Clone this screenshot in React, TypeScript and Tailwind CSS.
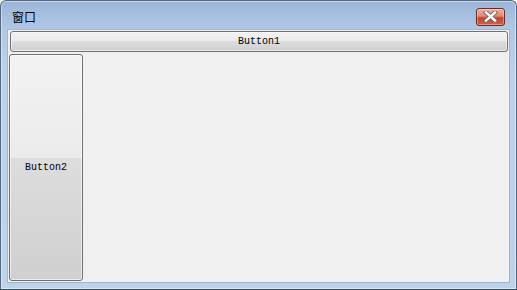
import React from 'react'

function CloseButton() {
  return (
    <button className="flex h-[18px] w-[29px] items-center justify-center rounded-[3px] border border-[#6e2b22] bg-[linear-gradient(#eab0a0_0%,#dc8a74_45%,#c4432c_55%,#d0624a_100%)] shadow-[inset_0_0_0_1px_rgba(255,255,255,0.35)]">
      <svg width="15" height="11" viewBox="0 0 15 11">
        <path d="M3 1.5 L12 9.5 M12 1.5 L3 9.5" stroke="#6a6a6a" strokeWidth="4.2" strokeLinecap="square" />
        <path d="M3 1.5 L12 9.5 M12 1.5 L3 9.5" stroke="#ffffff" strokeWidth="2.4" strokeLinecap="square" />
      </svg>
    </button>
  )
}

function WinButton({ label, className }: { label: string; className?: string }) {
  return (
    <button
      className={
        'flex items-center justify-center rounded-[3px] border border-[#707070] font-["Liberation_Mono",monospace] text-[10px] text-black shadow-[inset_0_0_0_1px_rgba(255,255,255,0.6)] ' +
        (className ?? '')
      }
    >
      {label}
    </button>
  )
}

export default function App() {
  return (
    <div className="flex h-[290px] w-[517px] flex-col overflow-hidden rounded-t-[6px] border border-[#55677c] border-b-[#2f5560] bg-[linear-gradient(#9bb6da_0px,#b0c8e4_28px,#bcd2ea_70px,#bcd3ea_100%)] shadow-[inset_0_0_0_1px_rgba(255,255,255,0.45)]">
      <div className="flex h-[28px] shrink-0 items-center justify-between pl-[11px] pr-[11px]">
        <span className='pt-[3px] font-["Noto_Sans_CJK_SC",sans-serif] text-[12px] leading-none text-black'>
          窗口
        </span>
        <div className="pt-[3px]">
          <CloseButton />
        </div>
      </div>
      <div className="mx-[6px] mb-[6px] flex flex-1 flex-col border border-[#9fb5cf] bg-[#f0f0f0] pl-[1px] pr-[1px] pt-[1px]">
        <WinButton
          label="Button1"
          className="ml-[1px] h-[21px] w-auto bg-[linear-gradient(#f2f2f2_0%,#ebebeb_50%,#dddddd_50%,#cfcfcf_100%)]"
        />
        <WinButton
          label="Button2"
          className="mt-[2px] mb-[1px] h-[227px] w-[74px] bg-[linear-gradient(#f2f2f2_0%,#ebebeb_46%,#dddddd_46%,#cfcfcf_100%)]"
        />
      </div>
    </div>
  )
}
